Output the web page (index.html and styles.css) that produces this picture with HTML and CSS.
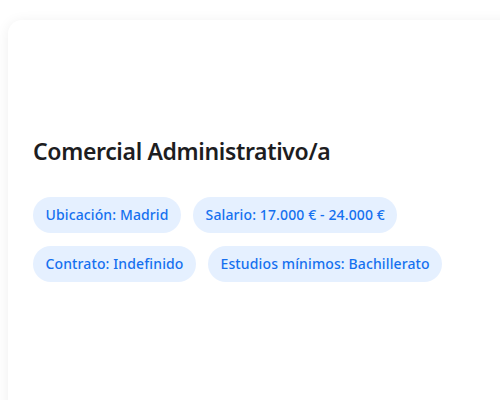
FILE: index.html
```html
<!DOCTYPE html>
<html lang="es">
<head>
<meta charset="utf-8">
<title>Oferta de empleo</title>
<link rel="stylesheet" href="styles.css">
</head>
<body>
  <main class="page">
    <article class="job-card">
      <h1 class="job-title">Comercial Administrativo/a</h1>
      <ul class="job-tags">
        <li class="tag">Ubicación: Madrid</li>
        <li class="tag">Salario: 17.000 € - 24.000 €</li>
        <li class="tag">Contrato: Indefinido</li>
        <li class="tag">Estudios mínimos: Bachillerato</li>
      </ul>
    </article>
  </main>
</body>
</html>
```

FILE: styles.css
```css
html, body {
  margin: 0;
  background: #ffffff;
  overflow: hidden;
}

body {
  font-family: "Noto Sans", "Open Sans", sans-serif;
  color: #1c1c1e;
}

.page {
  padding: 20px 0 0 8px;
}

.job-card {
  width: 520px;
  min-height: 420px;
  box-sizing: border-box;
  padding: 116px 25px 24px;
  background: #ffffff;
  border-radius: 14px;
  box-shadow: 0 2px 14px rgba(0, 0, 0, 0.07);
}

.job-title {
  margin: 0 0 31px;
  font-size: 23px;
  line-height: 30px;
  font-weight: 600;
  letter-spacing: -0.35px;
  color: #1d1d1f;
}

.job-tags {
  list-style: none;
  margin: 0;
  padding: 0;
  display: flex;
  flex-wrap: wrap;
  gap: 13px 12px;
  max-width: 470px;
}

.tag {
  padding: 8px 12.5px;
  font-size: 14px;
  line-height: 20px;
  font-weight: 500;
  letter-spacing: 0.12px;
  color: #1570ef;
  background: #e5f0ff;
  border-radius: 18px;
}
```
